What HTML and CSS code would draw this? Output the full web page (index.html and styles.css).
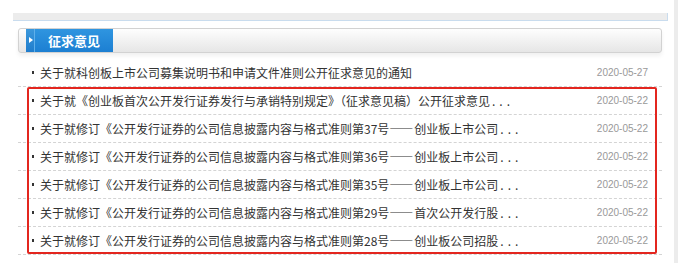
FILE: index.html
```html
<!DOCTYPE html>
<html lang="zh-CN">
<head>
  <meta charset="UTF-8" />
  <meta name="viewport" content="width=device-width, initial-scale=1.0" />
  <title>征求意见</title>
  <link rel="stylesheet" href="styles.css">
</head>
<body>
  <div class="page">
    <div class="main">
      <div class="strip"></div>
      <div class="panel">
        <div class="head">
          <div class="tab">
            <span class="tab-arrow"></span>
            <span class="tab-label">征求意见</span>
          </div>
        </div>
        <ul class="news">
          <li><a href="#">关于就科创板上市公司募集说明书和申请文件准则公开征求意见的通知</a><span class="date">2020-05-27</span></li>
          <li><a href="#">关于就《创业板首次公开发行证券发行与承销特别规定》（征求意见稿）公开征求意见<span class="more">...</span></a><span class="date">2020-05-22</span></li>
          <li><a href="#">关于就修订《公开发行证券的公司信息披露内容与格式准则第37号<span class="dash">——</span>创业板上市公司<span class="more">...</span></a><span class="date">2020-05-22</span></li>
          <li><a href="#">关于就修订《公开发行证券的公司信息披露内容与格式准则第36号<span class="dash">——</span>创业板上市公司<span class="more">...</span></a><span class="date">2020-05-22</span></li>
          <li><a href="#">关于就修订《公开发行证券的公司信息披露内容与格式准则第35号<span class="dash">——</span>创业板上市公司<span class="more">...</span></a><span class="date">2020-05-22</span></li>
          <li><a href="#">关于就修订《公开发行证券的公司信息披露内容与格式准则第29号<span class="dash">——</span>首次公开发行股<span class="more">...</span></a><span class="date">2020-05-22</span></li>
          <li><a href="#">关于就修订《公开发行证券的公司信息披露内容与格式准则第28号<span class="dash">——</span>创业板公司招股<span class="more">...</span></a><span class="date">2020-05-22</span></li>
          <div class="highlight"></div>
        </ul>
      </div>
    </div>
    <div class="rail"></div>
  </div>
</body>
</html>
```

FILE: styles.css
```css
body {
  margin: 0;
  background: #fff;
  color: #333;
  font-family: "Noto Sans CJK SC", "Liberation Sans", sans-serif;
  font-size: 12px;
  overflow: hidden;
}

.page {
  display: flex;
  height: 263px;
}

.main {
  width: 655px;
  margin-left: 13px;
  padding-top: 13px;
}

.strip {
  height: 7px;
  background: #ececec;
  border-bottom: 1px solid #c9dcee;
  border-right: 1px solid #c9dcee;
}

.rail {
  width: 4px;
  margin-left: 6px;
  background: #ececec;
}

.panel {
  margin: 7px 6px 0 5px;
}

.head {
  height: 23px;
  padding-left: 7px;
  border: 1px solid #d2d2d2;
  border-radius: 3px;
  background: linear-gradient(#fefefe, #f4f4f4 40%, #e6e6e6);
  box-shadow: 0 3px 4px rgba(0, 0, 0, 0.06);
}

.tab {
  display: flex;
  width: 87px;
  height: 23px;
}

.tab-arrow {
  position: relative;
  width: 8px;
  background: linear-gradient(#3b98dc, #1f7ccc);
  border-right: 1px solid #5fb0ea;
}

.tab-arrow::after {
  content: "";
  position: absolute;
  left: 3px;
  top: 8px;
  border-left: 4px solid #fff;
  border-top: 3px solid transparent;
  border-bottom: 3px solid transparent;
}

.tab-label {
  flex: 1;
  padding-left: 13px;
  line-height: 23px;
  color: #fff;
  font-weight: bold;
  font-size: 13px;
  background: linear-gradient(#2f95e0, #1c7fd2);
}

.news {
  position: relative;
  list-style: none;
  margin: 6px 0 0;
  padding: 0;
}

.news li {
  display: flex;
  align-items: center;
  height: 27px;
  padding: 0 14px 0 14px;
  border-bottom: 1px dashed #d4d4d4;
}

.news li::before {
  content: "";
  width: 2px;
  height: 3px;
  margin-right: 6px;
  background: #333;
}

.news a {
  flex: 1;
  color: #333;
  text-decoration: none;
  white-space: nowrap;
  overflow: hidden;
}

.more {
  margin-left: 2px;
  letter-spacing: 4px;
}

.dash {
  letter-spacing: 1px;
}

.date {
  color: #999;
  font-family: "Liberation Sans", sans-serif;
  font-size: 10px;
}

.highlight {
  position: absolute;
  left: 9px;
  top: 28px;
  width: 626px;
  height: 163px;
  border: 2px solid #e3261f;
  border-radius: 2px;
}
```
